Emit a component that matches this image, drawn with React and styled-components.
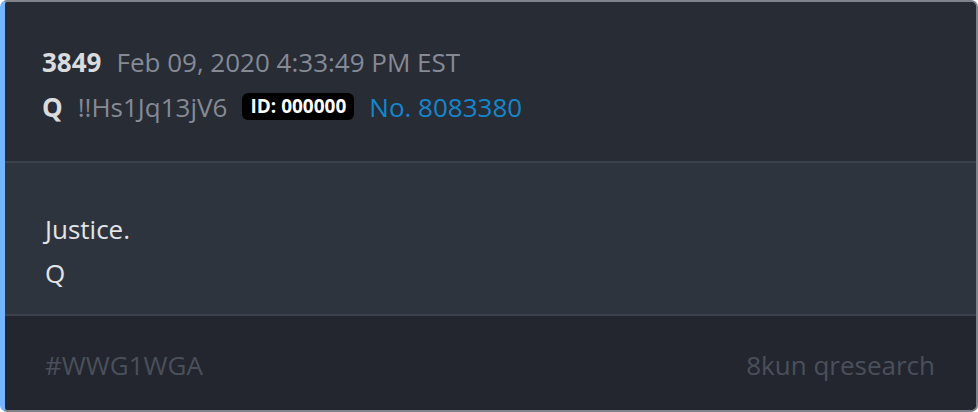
import React from "react";
import styled, { createGlobalStyle } from "styled-components";

const Global = createGlobalStyle`
  html, body { margin: 0; padding: 0; background: #ffffff; }
  body { font-family: "Open Sans", "Noto Sans", sans-serif; }
  * { box-sizing: border-box; }
`;

const Card = styled.article`
  width: 978px;
  height: 412px;
  display: flex;
  flex-direction: column;
  border: 2px solid #7e838c;
  border-left: 5px solid #75b4ff;
  border-radius: 7px;
  overflow: hidden;
  background: #282c35;
`;

const Header = styled.header`
  height: 161px;
  padding: 37px 0 0 37px;
  display: flex;
  flex-direction: column;
  background: #282c35;
  border-bottom: 2px solid #3c424c;
`;

const MetaRow = styled.div`
  display: flex;
  align-items: center;
  height: 45px;
  gap: 15px;
  font-size: 26px;
`;

const Strong = styled.span`
  font-weight: 700;
  color: #dadbdd;
`;

const Muted = styled.span`
  color: #858a95;
`;

const Badge = styled.span`
  background: #000;
  color: #fff;
  font-weight: 700;
  font-size: 19px;
  line-height: 1;
  padding: 4px 8px 4px;
  border-radius: 6px;
`;

const PostLink = styled.span`
  color: #1487cc;
`;

const Body = styled.section`
  height: 153px;
  padding: 44px 0 0 40px;
  background: #2e343e;
  border-bottom: 2px solid #3c424c;
  color: #e3e4e6;
  font-size: 26px;
`;

const Line = styled.div`
  height: 44px;
  line-height: 44px;
`;

const Footer = styled.footer`
  flex: 1;
  display: flex;
  justify-content: space-between;
  align-items: center;
  padding: 4px 41px 0 40px;
  background: #23262e;
  color: #4a505b;
  font-size: 26px;
`;

export default function App() {
  return (
    <>
      <Global />
      <Card>
        <Header>
          <MetaRow>
            <Strong>3849</Strong>
            <Muted>Feb 09, 2020 4:33:49 PM EST</Muted>
          </MetaRow>
          <MetaRow>
            <Strong>Q</Strong>
            <Muted>!!Hs1Jq13jV6</Muted>
            <Badge>ID: 000000</Badge>
            <PostLink>No. 8083380</PostLink>
          </MetaRow>
        </Header>
        <Body>
          <Line>Justice.</Line>
          <Line>Q</Line>
        </Body>
        <Footer>
          <span>#WWG1WGA</span>
          <span>8kun qresearch</span>
        </Footer>
      </Card>
    </>
  );
}
